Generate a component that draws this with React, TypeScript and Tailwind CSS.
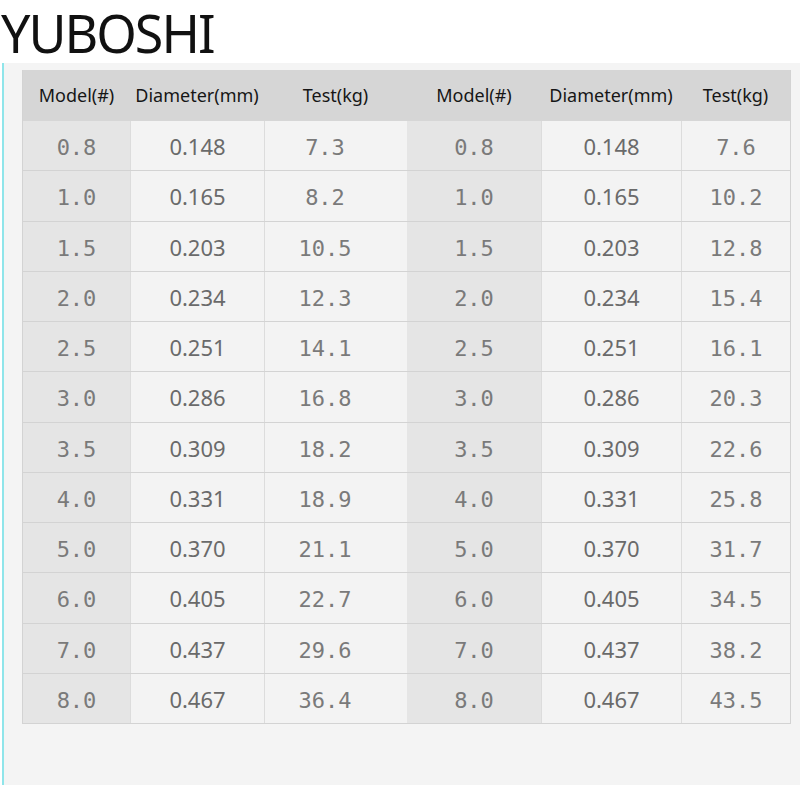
const rows: [string, string, string, string, string, string][] = [
  ['0.8', '0.148', '7.3', '0.8', '0.148', '7.6'],
  ['1.0', '0.165', '8.2', '1.0', '0.165', '10.2'],
  ['1.5', '0.203', '10.5', '1.5', '0.203', '12.8'],
  ['2.0', '0.234', '12.3', '2.0', '0.234', '15.4'],
  ['2.5', '0.251', '14.1', '2.5', '0.251', '16.1'],
  ['3.0', '0.286', '16.8', '3.0', '0.286', '20.3'],
  ['3.5', '0.309', '18.2', '3.5', '0.309', '22.6'],
  ['4.0', '0.331', '18.9', '4.0', '0.331', '25.8'],
  ['5.0', '0.370', '21.1', '5.0', '0.370', '31.7'],
  ['6.0', '0.405', '22.7', '6.0', '0.405', '34.5'],
  ['7.0', '0.437', '29.6', '7.0', '0.437', '38.2'],
  ['8.0', '0.467', '36.4', '8.0', '0.467', '43.5'],
]

const mono = "pt-[4px] font-['DejaVu_Sans_Mono',monospace] text-[22px] text-[#7a7a7a]"
const sans = "pt-[2px] font-['Noto_Sans',sans-serif] text-[22px] text-[#6a6a6a]"

function Row({ r }: { r: [string, string, string, string, string, string] }) {
  return (
    <div className="flex h-[50.25px] border-b border-[#d3d3d3]">
      <div className={`flex w-[107px] items-center justify-center bg-[#e5e5e5] ${mono}`}>{r[0]}</div>
      <div className={`flex w-[134px] items-center justify-center border-l border-[#dcdcdc] ${sans}`}>{r[1]}</div>
      <div className={`flex w-[143px] items-center justify-center border-l border-[#dcdcdc] pr-[22px] ${mono}`}>{r[2]}</div>
      <div className={`flex w-[134px] items-center justify-center bg-[#e5e5e5] ${mono}`}>{r[3]}</div>
      <div className={`flex w-[140px] items-center justify-center border-l border-[#dcdcdc] ${sans}`}>{r[4]}</div>
      <div className={`flex flex-1 items-center justify-center border-l border-[#dcdcdc] ${mono}`}>{r[5]}</div>
    </div>
  )
}

export default function App() {
  const head = ['Model(#)', 'Diameter(mm)', 'Test(kg)', 'Model(#)', 'Diameter(mm)', 'Test(kg)']
  const widths = ['w-[107px]', 'w-[134px]', 'w-[143px]', 'w-[134px]', 'w-[140px]', 'flex-1']

  return (
    <div className="h-[800px] w-[800px] bg-white">
      <div className="h-[63px] pt-[3px] pl-px font-['Noto_Sans',sans-serif] text-[52px] leading-[60px] tracking-[-2px] text-[#111]">
        YUBOSHI
      </div>
      <div className="ml-[2px] h-[722px] border-l-2 border-[#8fe5ea] bg-[#f4f4f4] pt-[7px] pl-[18px] pr-[9px]">
        <div className="border-x border-[#d3d3d3] bg-[#f3f3f3]">
          <div className="flex h-[51px] bg-[#d6d6d6] font-['Noto_Sans',sans-serif] text-[18px] text-[#161616]">
            {head.map((h, i) => (
              <div key={i} className={`flex items-center justify-center ${widths[i]}`}>
                {h}
              </div>
            ))}
          </div>
          {rows.map((r, i) => (
            <Row key={i} r={r} />
          ))}
        </div>
      </div>
    </div>
  )
}
